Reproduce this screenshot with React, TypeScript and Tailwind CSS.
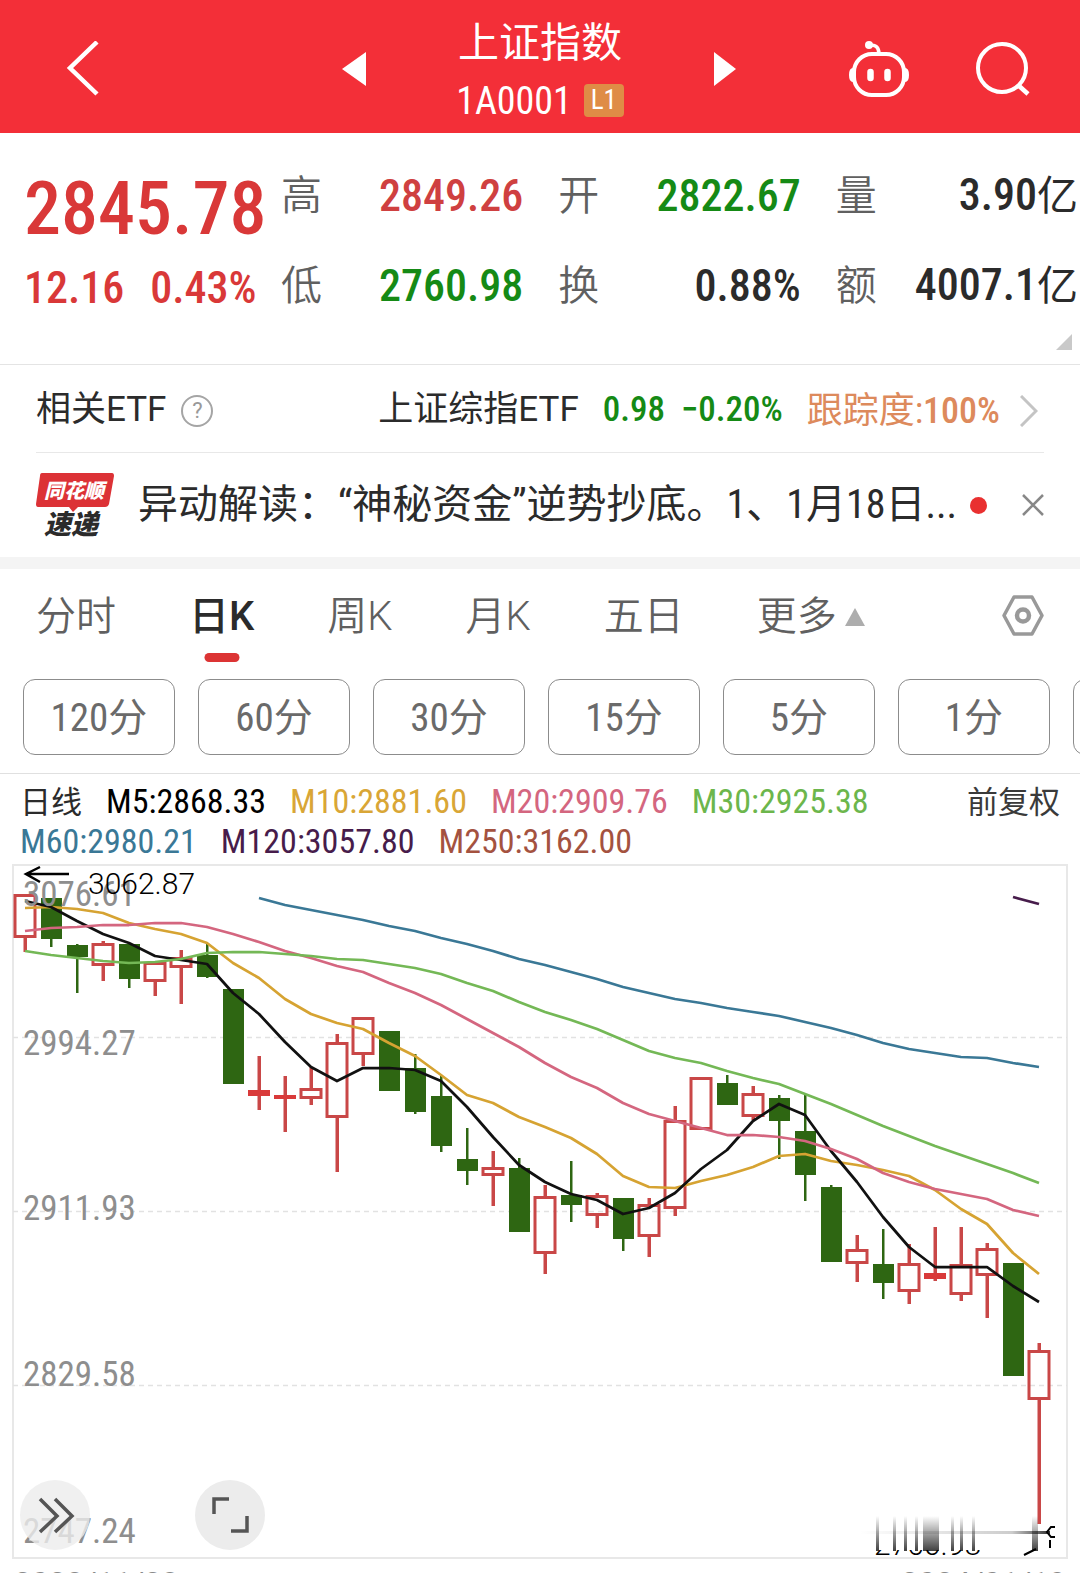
import { useState } from "react";

type Candle = {
  up: boolean;
  high: number;
  top: number;
  bottom: number;
  low: number;
};

const c = (up: boolean, high: number, top: number, bottom: number, low: number): Candle => ({
  up,
  high,
  top,
  bottom,
  low,
});

const candles: Candle[] = [
  c(true, 894, 894, 938, 952),
  c(false, 898, 898, 939, 947),
  c(false, 944, 945, 957, 993),
  c(true, 941, 943, 966, 981),
  c(false, 944, 944, 979, 988),
  c(true, 962, 962, 982, 996),
  c(true, 950, 957, 968, 1004),
  c(false, 943, 955, 977, 978),
  c(false, 989, 989, 1084, 1084),
  c(true, 1056, 1090, 1096, 1110),
  c(true, 1076, 1095, 1099, 1132),
  c(true, 1067, 1088, 1099, 1105),
  c(true, 1034, 1042, 1118, 1172),
  c(true, 1017, 1017, 1055, 1066),
  c(false, 1031, 1031, 1091, 1091),
  c(false, 1054, 1068, 1112, 1114),
  c(false, 1075, 1096, 1146, 1152),
  c(false, 1128, 1159, 1171, 1185),
  c(true, 1151, 1167, 1176, 1206),
  c(false, 1158, 1168, 1232, 1232),
  c(true, 1185, 1196, 1254, 1274),
  c(false, 1161, 1195, 1205, 1222),
  c(true, 1193, 1195, 1216, 1228),
  c(false, 1198, 1198, 1239, 1251),
  c(true, 1198, 1204, 1237, 1257),
  c(true, 1106, 1120, 1209, 1216),
  c(true, 1077, 1077, 1130, 1130),
  c(false, 1075, 1083, 1105, 1105),
  c(true, 1086, 1093, 1117, 1120),
  c(false, 1095, 1098, 1121, 1159),
  c(false, 1094, 1131, 1175, 1201),
  c(false, 1185, 1187, 1262, 1262),
  c(true, 1235, 1249, 1264, 1282),
  c(false, 1229, 1264, 1283, 1299),
  c(true, 1244, 1263, 1292, 1304),
  c(true, 1227, 1273, 1279, 1281),
  c(true, 1227, 1264, 1295, 1301),
  c(true, 1243, 1248, 1276, 1318),
  c(false, 1263, 1263, 1376, 1376),
  c(true, 1343, 1350, 1400, 1524),
];

const averages = [
  {
    color: "#3a7896",
    start: 9,
    values: [
      898, 905, 910, 915, 920, 926, 931, 938, 944, 951, 959, 965, 972, 979, 987, 993, 999, 1003,
      1008, 1012, 1016, 1022, 1028, 1035, 1043, 1049, 1053, 1057, 1058, 1063, 1067,
    ],
  },
  {
    color: "#d6a332",
    start: 0,
    values: [
      908, 907, 909, 913, 923, 929, 934, 943, 963, 978, 999, 1014, 1023, 1029, 1043, 1056, 1075,
      1095, 1103, 1117, 1127, 1138, 1154, 1176, 1187, 1188, 1181, 1175, 1167, 1156, 1154, 1161,
      1165, 1170, 1176, 1190, 1209, 1224, 1253, 1274,
    ],
  },
  {
    color: "#111111",
    start: 0,
    values: [
      901, 907, 921, 934, 943, 956, 960, 964, 993, 1014, 1042, 1067, 1081, 1068, 1068, 1070, 1081,
      1107, 1137, 1165, 1182, 1194, 1200, 1214, 1208, 1193, 1169, 1150, 1121, 1104, 1115, 1151,
      1182, 1217, 1247, 1267, 1267, 1267, 1286, 1302,
    ],
  },
  {
    color: "#d4667f",
    start: 0,
    values: [
      931, 928, 927, 925, 925, 923, 923, 927, 934, 942, 951, 958, 966, 972, 983, 993, 1005, 1019,
      1033, 1047, 1063, 1077, 1088, 1103, 1114, 1121, 1128, 1135, 1135, 1137, 1141, 1149, 1159,
      1173, 1182, 1189, 1194, 1199, 1210, 1216,
    ],
  },
  {
    color: "#74b856",
    start: 0,
    values: [
      951, 955, 958, 961, 963, 962, 959, 953, 952, 952, 954, 956, 959, 960, 964, 968, 974, 983,
      991, 1002, 1012, 1020, 1029, 1040, 1051, 1058, 1063, 1071, 1078, 1084, 1094, 1104, 1115,
      1126, 1136, 1146, 1155, 1164, 1173, 1183,
    ],
  },
  { color: "#471c4b", start: 38, values: [897, 904] },
];

const axisLabels = [
  { text: "3076.61", y: 906 },
  { text: "2994.27", y: 1055 },
  { text: "2911.93", y: 1220 },
  { text: "2829.58", y: 1386 },
  { text: "2747.24", y: 1543 },
];

const quotes = [
  { label: "高", value: "2849.26", color: "text-[#cf4040]" },
  { label: "开", value: "2822.67", color: "text-[#158a15]" },
  { label: "量", value: "3.90亿", color: "text-[#2b2b2b]" },
  { label: "低", value: "2760.98", color: "text-[#158a15]" },
  { label: "换", value: "0.88%", color: "text-[#2b2b2b]" },
  { label: "额", value: "4007.1亿", color: "text-[#2b2b2b]" },
];

const tabs = ["分时", "日K", "周K", "月K", "五日"];
const periods = ["120分", "60分", "30分", "15分", "5分", "1分"];

const legend = [
  [
    { text: "M5:2868.33", color: "text-black" },
    { text: "M10:2881.60", color: "text-[#d9a636]" },
    { text: "M20:2909.76", color: "text-[#d4667f]" },
    { text: "M30:2925.38", color: "text-[#6cb64c]" },
  ],
  [
    { text: "M60:2980.21", color: "text-[#3a7896]" },
    { text: "M120:3057.80", color: "text-[#471c4b]" },
    { text: "M250:3162.00", color: "text-[#a4523f]" },
  ],
];

const numeric = "font-['Roboto_Condensed','Roboto','Noto_Sans_CJK_SC',sans-serif]";

const xAt = (i: number) => 25 + i * 26;

const Header = () => (
  <header className="grid h-[133px] grid-cols-[1fr_348px_1fr] items-center bg-[#f32f38] pt-1 text-white">
    <div className="flex items-center justify-between pl-[66px]">
      <button aria-label="返回">
        <svg className="h-[56px] w-[33px]" viewBox="0 0 33 56" fill="none" stroke="currentColor" strokeWidth="4.5">
          <path d="M31 1 4 27 31 53" />
        </svg>
      </button>
      <button aria-label="上一只">
        <svg className="h-[34px] w-[24px]" viewBox="0 0 24 34" fill="currentColor">
          <path d="M24 0v34L0 17z" />
        </svg>
      </button>
    </div>
    <div className="flex flex-col items-center pt-1">
      <h1 className="text-[41px] leading-[60px]">上证指数</h1>
      <div className="flex items-center gap-3">
        <span className={`${numeric} text-[38px] leading-[56px]`}>1A0001</span>
        <span className={`${numeric} w-10 rounded-sm bg-[#df8c46] text-center text-[27px] leading-[33px]`}>
          L1
        </span>
      </div>
    </div>
    <div className="flex items-center pr-[50px]">
      <button aria-label="下一只" className="mr-auto">
        <svg className="h-[34px] w-[22px]" viewBox="0 0 22 34" fill="currentColor">
          <path d="M0 0v34L22 17z" />
        </svg>
      </button>
      <button aria-label="智能助手" className="mr-[66px]">
        <svg className="h-[57px] w-[62px]" viewBox="0 0 62 57" fill="none" stroke="currentColor">
          <path d="M31 14C31 7 28 5 21 5" strokeWidth="3.5" />
          <circle cx="21" cy="5" r="4" fill="currentColor" stroke="none" />
          <rect x="6" y="14" width="50" height="41" rx="18" strokeWidth="4" />
          <path d="M5 28q-4 0-4 7t4 7zM57 28q4 0 4 7t-4 7z" fill="currentColor" stroke="none" />
          <path d="M22.500 32v6M39.500 32v6" strokeWidth="6.500" strokeLinecap="round" />
        </svg>
      </button>
      <button aria-label="搜索">
        <svg className="h-[54px] w-[54px]" viewBox="0 0 54 54" fill="none" stroke="currentColor" strokeWidth="4">
          <circle cx="26" cy="26" r="24" />
          <path d="m42 43 10 9" strokeWidth="4.500" />
        </svg>
      </button>
    </div>
  </header>
);

const Quote = () => (
  <section className="relative flex h-[232px] items-start border-b border-[#e4e4e4] pt-8">
    <div className={`${numeric} w-[281px] shrink-0 pt-1 pl-6 text-[#d93838]`}>
      <p className="text-[74px] leading-[80px] font-medium">2845.78</p>
      <p className="flex gap-[26px] pt-3.5 text-[44px] leading-[50px] font-medium">
        <span>12.16</span>
        <span>0.43%</span>
      </p>
    </div>
    <dl className="grid flex-1 grid-cols-3 gap-x-[35px] gap-y-[29px] pr-0.5">
      {quotes.map((q) => (
        <div key={q.label} className="flex items-center justify-between leading-[60px]">
          <dt className="text-[41px] font-[350] text-[#606060]">{q.label}</dt>
          <dd className={`${numeric} ${q.color} text-[44px] font-medium whitespace-nowrap`}>
            {q.value.replace("亿", "")}
            {q.value.endsWith("亿") && <span className="text-[41px] font-normal">亿</span>}
          </dd>
        </div>
      ))}
    </dl>
    <svg className="absolute right-2 bottom-3.5 size-4" viewBox="0 0 16 16" fill="#c9c9c9">
      <path d="M16 0v16H0z" />
    </svg>
  </section>
);

const NewsLogo = () => (
  <svg className="h-[70px] w-[78px] shrink-0" viewBox="0 0 78 70">
    <path d="M6 3h70q2 0 2 3l-5 28q-1 3-4 3H42l-5 5-4-5H2q-2 0-2-3L4 6q0-3 2-3z" fill="#dc3236" />
    <text x="8" y="28" fill="#fff" fontSize="20" fontWeight="900" fontStyle="italic">
      同花顺
    </text>
    <text x="8" y="64" fill="#2b2b2b" fontSize="27" fontWeight="900" fontStyle="italic">
      速递
    </text>
  </svg>
);

const Related = () => (
  <section className="border-b-[12px] border-[#f4f4f4] px-9 text-[#2b2b2b]">
    <div className="flex h-[88px] items-center border-b border-[#e8e8e8] pt-1 text-[35px]">
      <span>相关ETF</span>
      <button
        aria-label="说明"
        className="ml-[15px] size-8 rounded-full border-2 border-[#a5a5a5] text-[22px] leading-7 text-[#999]"
      >
        ?
      </button>
      <a href="#etf" className="ml-auto flex items-center whitespace-nowrap">
        <span>上证综指ETF</span>
        <span className={`${numeric} ml-6 font-medium text-[#158a15]`}>0.98</span>
        <span className={`${numeric} ml-4 font-medium text-[#158a15]`}>−0.20%</span>
        <span className={`${numeric} ml-6 text-[36px] text-[#dd8a5c]`}>
          跟踪度:<span className="font-medium">100%</span>
        </span>
        <svg
          className="mr-1.5 ml-5 h-8 w-[18px]"
          viewBox="0 0 18 32"
          fill="none"
          stroke="#c4c4c4"
          strokeWidth="3"
        >
          <path d="m1 1 15 15L1 31" />
        </svg>
      </a>
    </div>
    <div className="flex h-[104px] items-center">
      <NewsLogo />
      <a href="#news" className="ml-6 text-[40px] whitespace-nowrap">
        异动解读：“神秘资金”逆势抄底。<span className={numeric}>1、1月18日</span>...
      </a>
      <span className="ml-auto size-[17px] shrink-0 rounded-full bg-[#e93030]" />
      <button aria-label="关闭" className="ml-[35px]">
        <svg className="size-[22px]" viewBox="0 0 22 22" stroke="#888" strokeWidth="2.500">
          <path d="m1 1 20 20M21 1 1 21" />
        </svg>
      </button>
    </div>
  </section>
);

const Tabs = () => {
  const [active, setActive] = useState("日K");

  return (
    <nav className="flex h-[110px] items-start gap-[73px] px-9 pt-[18px] text-[40px] leading-[60px] font-[350]">
      {tabs.map((tab) => (
        <button
          key={tab}
          onClick={() => setActive(tab)}
          className={`relative ${active === tab ? "font-medium text-[#2b2b2b]" : "text-[#606060]"}`}
        >
          {tab}
          {active === tab && (
            <span className="absolute -bottom-[15px] left-1/2 h-[9px] w-[35px] -translate-x-1/2 rounded-full bg-[#dc3434]" />
          )}
        </button>
      ))}
      <button className="flex items-center gap-2 text-[#606060]">
        更多
        <svg className="h-[18px] w-5" viewBox="0 0 20 18" fill="#adadad">
          <path d="M10 0 20 18H0z" />
        </svg>
      </button>
      <button aria-label="设置" className="ml-auto self-start pt-2">
        <svg className="h-[41px] w-[42px]" viewBox="0 0 42 41" fill="none" stroke="#999">
          <path d="M12 2h18l10 18.500L30 39H12L2 20.500z" strokeWidth="3.500" strokeLinejoin="round" />
          <circle cx="21" cy="20.500" r="6" strokeWidth="4.500" />
        </svg>
      </button>
    </nav>
  );
};

const Periods = () => (
  <div className="flex h-[95px] gap-[23px] overflow-hidden border-b border-[#e0e0e0] pl-[23px]">
    {periods.map((period) => (
      <button
        key={period}
        className={`${numeric} h-[76px] w-[152px] shrink-0 rounded-xl border border-[#8c8c8c] pt-0.5 text-[39px] text-[#6a6a6a]`}
      >
        {period}
      </button>
    ))}
    <button aria-label="更多周期" className="h-[76px] w-[152px] shrink-0 rounded-xl border border-[#8c8c8c]" />
  </div>
);

const Legend = () => (
  <div className={`${numeric} px-5 pt-2 text-[34px] leading-[38px]`}>
    <div className="flex items-baseline gap-6">
      <span className="text-[31px] text-[#2b2b2b]">日线</span>
      {legend[0].map((item) => (
        <span key={item.text} className={item.color}>
          {item.text}
        </span>
      ))}
      <button className="ml-auto text-[31px] text-[#3a3a3a]">前复权</button>
    </div>
    <div className="flex items-baseline gap-6">
      {legend[1].map((item) => (
        <span key={item.text} className={item.color}>
          {item.text}
        </span>
      ))}
    </div>
  </div>
);

const CandleShape = ({ candle, x }: { candle: Candle; x: number }) => {
  const { up, high, top, bottom, low } = candle;
  if (!up) {
    return (
      <g fill="#2e6612">
        <rect x={x - 1} y={high} width="2.500" height={low - high} />
        <rect x={x - 10} y={top} width="21" height={bottom - top} />
      </g>
    );
  }
  const solid = bottom - top < 8;
  return (
    <g fill="#c94747">
      <rect x={x - 1.5} y={high} width="3.500" height={top - high} />
      <rect x={x - 1.5} y={bottom} width="3.500" height={low - bottom} />
      {solid ? (
        <rect x={x - 11} y={top} width="22" height={bottom - top} fill="#d93a3a" />
      ) : (
        <rect
          x={x - 10}
          y={top + 1.5}
          width="20"
          height={bottom - top - 3}
          fill="none"
          stroke="#c94747"
          strokeWidth="3"
        />
      )}
    </g>
  );
};

const Smear = () => (
  <g>
    {[877, 894, 905, 916, 952, 961, 973].map((x) => (
      <rect key={x} x={x - 1} y="1516" width="3" height="35" fill="url(#fade)" />
    ))}
    <rect x="923" y="1516" width="16" height="35" fill="url(#fade)" />
    <rect x="1032" y="1516" width="6" height="35" fill="url(#fade)" />
    <rect x="860" y="1531" width="190" height="3" fill="url(#fadeX)" />
    <text x="874" y="1555" fontSize="30" fontWeight="300" fill="#000" clipPath="url(#low)">
      2760.98
    </text>
    <path d="m1024 1555 12-6M1055 1527h-4l-4 5 4 5h4M1050 1540v8" fill="none" stroke="#000" strokeWidth="2" />
  </g>
);

const Chart = () => (
  <section className="relative">
    <svg className="block w-full" viewBox="0 860 1080 702">
      <defs>
        <linearGradient id="fade" x1="0" y1="0" x2="0" y2="1">
          <stop offset="0" stopColor="#000" stopOpacity="0" />
          <stop offset="1" stopColor="#000" stopOpacity="0.750" />
        </linearGradient>
        <linearGradient id="fadeX" x1="0" y1="0" x2="1" y2="0">
          <stop offset="0" stopColor="#000" stopOpacity="0" />
          <stop offset="0.800" stopColor="#000" stopOpacity="0.200" />
          <stop offset="1" stopColor="#000" stopOpacity="0.800" />
        </linearGradient>
        <clipPath id="low">
          <rect x="870" y="1550" width="110" height="8" />
        </clipPath>
      </defs>
      <rect x="13" y="865" width="1054" height="693" fill="none" stroke="#e8e8e8" strokeWidth="2" />
      {[1037.5, 1211.5, 1385.5].map((y) => (
        <path key={y} d={`M13 ${y}H1067`} stroke="#e2e2e2" strokeWidth="1.500" strokeDasharray="5 4" />
      ))}
      {candles.map((candle, i) => (
        <CandleShape key={i} candle={candle} x={xAt(i)} />
      ))}
      {averages.map((line) => (
        <polyline
          key={line.color}
          points={line.values.map((y, i) => `${xAt(line.start + i)},${y}`).join(" ")}
          fill="none"
          stroke={line.color}
          strokeWidth="2.750"
          strokeLinejoin="round"
        />
      ))}
      <g className={numeric} fill="#8e8e8e" fontSize="35">
        {axisLabels.map((label) => (
          <text key={label.text} x="23" y={label.y}>
            {label.text}
          </text>
        ))}
      </g>
      <path d="M69 874H26M40 867l-14 7 14 8" fill="none" stroke="#000" strokeWidth="2.500" />
      <text x="88" y="894" fontSize="30" fontWeight="300" fill="#000">
        3062.87
      </text>
      <Smear />
    </svg>
    <div className="absolute bottom-3 left-5 flex gap-[105px]">
      <button aria-label="展开" className="size-[70px] rounded-full bg-[#ececec]/80">
        <svg className="size-full" viewBox="0 0 70 70" fill="none" stroke="#555" strokeWidth="3.500">
          <path d="m20 19 17 17-17 16M35 19l17 17-17 16" />
        </svg>
      </button>
      <button aria-label="全屏" className="size-[70px] rounded-full bg-[#ececec]">
        <svg className="size-full" viewBox="0 0 70 70" fill="none" stroke="#555" strokeWidth="3.500">
          <path d="M19 34V19h15M52 36v15H36" />
        </svg>
      </button>
    </div>
  </section>
);

export default function App() {
  return (
    <div className="h-screen overflow-hidden bg-white font-['Roboto','Noto_Sans_CJK_SC',sans-serif]">
      <Header />
      <Quote />
      <Related />
      <Tabs />
      <Periods />
      <Legend />
      <Chart />
      <div className="flex justify-between px-[14px] pt-1 text-[31px] leading-9 text-[#8a8a8a]">
        <time>2023/11/23</time>
        <time>2024/01/18</time>
      </div>
    </div>
  );
}
